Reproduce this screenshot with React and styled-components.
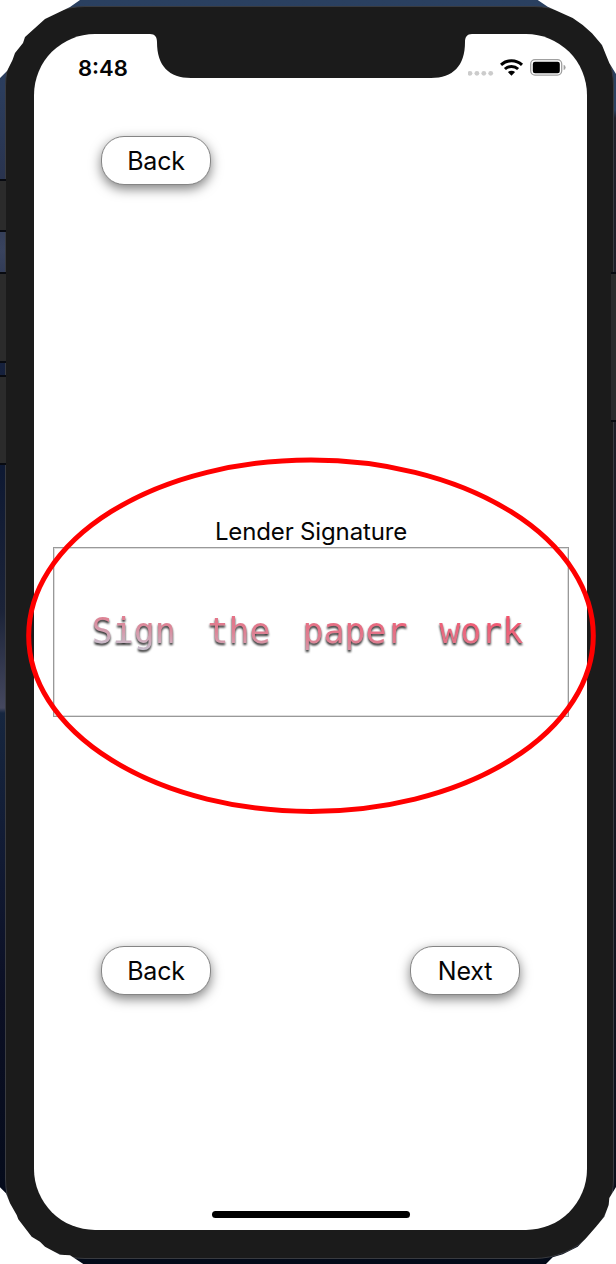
import React from "react";
import styled, { createGlobalStyle } from "styled-components";

const GlobalStyle = createGlobalStyle`
  *, *::before, *::after { box-sizing: border-box; }
  body { margin: 0; background: #fff; font-family: Inter, "Liberation Sans", sans-serif; }
`;

const Stage = styled.main`
  position: relative;
  display: flex;
  width: 616px;
  height: 1264px;
  overflow: hidden;
  background: linear-gradient(180deg, #2a4060 0, #2b3d5d 90px, #29334e 180px, #39435e 250px, #16213d 365px, #0e1933 470px, #1b2338 610px, #45485f 708px, #16263f 713px, #111a33 860px, #0b0f24 1000px, #030a18 1264px);
`;

const Rail = styled.div`
  display: flex;
  flex-direction: column;
  flex: 0 0 ${(p) => p.$width}px;
  min-width: 0;
  background: ${(p) => p.$fill || "transparent"};
`;

const SideKey = styled.div`
  position: relative;
  z-index: 1;
  width: 6px;
  height: ${(p) => p.$height}px;
  margin-top: ${(p) => p.$gap}px;
  margin-left: ${(p) => p.$shift || 0}px;
  background: #2b2b2b;
  border: solid #080a10;
  border-width: 2px 0;
`;

const Device = styled.section`
  flex: 1;
  display: flex;
  margin: 6px 0 5px;
  padding: 27px 26px 28px 28px;
  border: 1px solid #393b40;
  border-radius: 80px;
  background: #1b1b1b;
`;

const Screen = styled.div`
  flex: 1;
  display: flex;
  flex-direction: column;
  align-items: stretch;
  border-radius: 61px;
  background: #fff;
  color: #050505;
`;

const StatusBar = styled.header`
  display: flex;
  justify-content: space-between;
  align-items: center;
  height: 67px;
  padding: 0 21px 0 44px;
`;

const Clock = styled.time`
  font-size: 22px;
  font-weight: 600;
  line-height: 28px;
`;

const StatusIcons = styled.div`
  display: flex;
  align-items: center;
  gap: 6px;
`;

const NotchArt = styled.svg`
  position: absolute;
  left: 148px;
  top: 33px;
`;

const ButtonRow = styled.div`
  display: flex;
  justify-content: space-between;
  padding: 0 67px;
  margin-top: ${(p) => p.$top}px;
`;

const PillButton = styled.button`
  width: 110px;
  height: 49px;
  padding: 1px 0 0;
  border: 1px solid #858585;
  border-radius: 23px;
  background: #fff;
  box-shadow: 0 4px 12px rgba(0, 0, 0, 0.5);
  color: #050505;
  font: 400 25px/30px Inter, "Liberation Sans", sans-serif;
  letter-spacing: -0.2px;
`;

const SignatureField = styled.section`
  display: flex;
  flex-direction: column;
  margin: 331px 18px 0 19px;
`;

const FieldLabel = styled.h1`
  margin: 0;
  text-align: center;
  font-size: 24px;
  font-weight: 400;
  line-height: 31px;
  letter-spacing: -0.15px;
`;

const SignaturePad = styled.div`
  display: flex;
  align-items: center;
  justify-content: center;
  height: 170px;
  padding: 0 7px 2px 0;
  border: 1px solid #999;
  box-shadow: inset 0 0 0 1px #ddd;
`;

const SignatureText = styled.span`
  font: 400 35px/46px "DejaVu Sans Mono", monospace;
  letter-spacing: -0.1px;
  word-spacing: 11px;
  white-space: nowrap;
  color: transparent;
  background: linear-gradient(to top right, #c3c9d8 5%, #dd8395 40%, #f5506a 90%);
  background-clip: text;
  -webkit-background-clip: text;
  filter: drop-shadow(0 2px 1px rgba(0, 0, 0, 0.85));
`;

const HomeIndicator = styled.div`
  width: 198px;
  height: 7px;
  margin: auto auto 12px;
  border-radius: 4px;
  background: #000;
`;

const Overlay = styled.svg`
  position: absolute;
  inset: 0;
  z-index: 2;
  pointer-events: none;
`;

function Notch() {
  return (
    <NotchArt width="326" height="46" viewBox="148 33 326 46">
      <path fill="#1b1b1b" d="M148 33V34H150C155 34 157 37 157 42C157 66 169 78 191 78H431C453 78 465 66 465 42C465 37 467 34 472 34H474V33Z" />
    </NotchArt>
  );
}

function SignalDots() {
  return (
    <svg width="26" height="16" viewBox="0 0 26 16" fill="#ccc">
      {[2, 8.9, 15.8, 22.7].map((x) => <circle key={x} cx={x} cy="13.3" r="2.4" />)}
    </svg>
  );
}

function Wifi() {
  return (
    <svg width="24" height="18" viewBox="0.5 0.3 24 18">
      <g fill="none" stroke="#000" strokeWidth="3">
        <path d="M1.5 6.2C7.4.7 16.6.7 22.5 6.2" />
        <path d="M5.4 10.3C9.2 6.8 14.8 6.8 18.6 10.3" />
      </g>
      <path d="M8.4 13.4C10.5 11.6 13.5 11.6 15.6 13.4L12 17Z" />
    </svg>
  );
}

function Battery() {
  return (
    <svg width="36" height="17" viewBox="0 0 36 17">
      <rect x=".7" y=".7" width="31" height="15.4" rx="4.3" fill="none" stroke="#a0a0a0" strokeWidth="1.3" />
      <rect x="2.8" y="2.8" width="27" height="11.4" rx="2.2" />
      <path d="M33.6 5.7Q35.6 6.3 35.6 8.4T33.6 11.1Z" fill="#a0a0a0" />
    </svg>
  );
}

export default function App() {
  return (
    <>
      <GlobalStyle />
      <Stage>
        <Rail $width={5}>
          <SideKey $gap={179} $height={53} />
          <SideKey $gap={40} $height={91} />
          <SideKey $gap={12} $height={90} />
        </Rail>
        <Device>
          <Screen>
            <StatusBar>
              <Clock>8:48</Clock>
              <StatusIcons>
                <SignalDots />
                <Wifi />
                <Battery />
              </StatusIcons>
            </StatusBar>
            <ButtonRow $top={35}>
              <PillButton>Back</PillButton>
            </ButtonRow>
            <SignatureField>
              <FieldLabel>Lender Signature</FieldLabel>
              <SignaturePad>
                <SignatureText>Sign the paper work</SignatureText>
              </SignaturePad>
            </SignatureField>
            <ButtonRow $top={229}>
              <PillButton>Back</PillButton>
              <PillButton>Next</PillButton>
            </ButtonRow>
            <HomeIndicator />
          </Screen>
        </Device>
        <Rail $width={2} $fill="linear-gradient(#2b4160 110px, #20202a 118px, #191a24 700px, #080d1a)">
          <SideKey $gap={272} $height={150} $shift={-3} />
        </Rail>
        <Notch />
        <Overlay width="616" height="1264" viewBox="0 0 616 1264">
          <g fill="#fff">
            <path d="M0 0H80L70 7L45 19L25 37L23 43L15 53L12.5 60L7 71L0 78Z" />
            <path d="M616 0H537.7L547.7 6.7L566 15L572.7 18L582.7 25L592 33.3L602 45L606 55L609.3 63L616 74Z" />
            <path d="M0 1264V1187.3L6 1193.3L10 1203.3L16.7 1215L18.3 1219.3L31.7 1236.7L40 1241.7L45 1246.7L60 1254.7L70 1255.3L83.3 1264Z" />
            <path d="M616 1264V1187L609.3 1198L608.7 1205L604.3 1216.7L596 1226.7L586 1238.3L577.7 1246.7L562.7 1254.3L552.7 1257.3L546 1264Z" />
          </g>
          <ellipse cx="311" cy="635.7" rx="282.3" ry="175.7" fill="none" stroke="#f00" strokeWidth="5" />
        </Overlay>
      </Stage>
    </>
  );
}
